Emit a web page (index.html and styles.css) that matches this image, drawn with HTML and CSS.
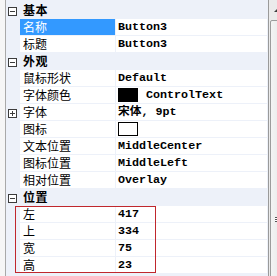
FILE: index.html
```html
<!DOCTYPE html>
<html lang="zh-CN">
<head>
  <meta charset="UTF-8" />
  <title>属性</title>
  <link rel="stylesheet" href="styles.css">
</head>
<body>
  <div class="pane">
    <div class="edge"></div>

    <div class="grid">
      <div class="row cat">
        <span class="gutter"><svg class="tog" viewBox="0 0 9 9"><rect x="0.5" y="0.5" width="8" height="8"/><line x1="2" y1="4.5" x2="7" y2="4.5"/></svg></span>
        <span class="label">基本</span>
      </div>
      <div class="row sel">
        <span class="gutter"></span>
        <span class="name">名称</span>
        <span class="value">Button3</span>
      </div>
      <div class="row">
        <span class="gutter"></span>
        <span class="name">标题</span>
        <span class="value">Button3</span>
      </div>

      <div class="row cat">
        <span class="gutter"><svg class="tog" viewBox="0 0 9 9"><rect x="0.5" y="0.5" width="8" height="8"/><line x1="2" y1="4.5" x2="7" y2="4.5"/></svg></span>
        <span class="label">外观</span>
      </div>
      <div class="row">
        <span class="gutter"></span>
        <span class="name">鼠标形状</span>
        <span class="value">Default</span>
      </div>
      <div class="row">
        <span class="gutter"></span>
        <span class="name">字体颜色</span>
        <span class="value"><i class="swatch black"></i>ControlText</span>
      </div>
      <div class="row">
        <span class="gutter"><svg class="tog" viewBox="0 0 9 9"><rect x="0.5" y="0.5" width="8" height="8"/><line x1="2" y1="4.5" x2="7" y2="4.5"/><line x1="4.5" y1="2" x2="4.5" y2="7"/></svg></span>
        <span class="name">字体</span>
        <span class="value">宋体, 9pt</span>
      </div>
      <div class="row">
        <span class="gutter"></span>
        <span class="name">图标</span>
        <span class="value"><i class="swatch empty"></i></span>
      </div>
      <div class="row">
        <span class="gutter"></span>
        <span class="name">文本位置</span>
        <span class="value">MiddleCenter</span>
      </div>
      <div class="row">
        <span class="gutter"></span>
        <span class="name">图标位置</span>
        <span class="value">MiddleLeft</span>
      </div>
      <div class="row">
        <span class="gutter"></span>
        <span class="name">相对位置</span>
        <span class="value">Overlay</span>
      </div>

      <div class="row cat">
        <span class="gutter"><svg class="tog" viewBox="0 0 9 9"><rect x="0.5" y="0.5" width="8" height="8"/><line x1="2" y1="4.5" x2="7" y2="4.5"/></svg></span>
        <span class="label">位置</span>
      </div>
      <div class="group">
        <div class="row">
          <span class="gutter"></span>
          <span class="name">左</span>
          <span class="value">417</span>
        </div>
        <div class="row">
          <span class="gutter"></span>
          <span class="name">上</span>
          <span class="value">334</span>
        </div>
        <div class="row">
          <span class="gutter"></span>
          <span class="name">宽</span>
          <span class="value">75</span>
        </div>
        <div class="row">
          <span class="gutter"></span>
          <span class="name">高</span>
          <span class="value">23</span>
        </div>
        <div class="mark"></div>
      </div>
    </div>

    <div class="scroll">
      <div class="sbar">
        <div class="arrow"></div>
        <div class="thumb"><div class="grip"></div></div>
      </div>
    </div>
  </div>
</body>
</html>
```

FILE: styles.css
```css
body {
  margin: 0;
  background: #f0f0f0;
  font-family: "Noto Sans CJK SC", sans-serif;
  font-size: 12px;
  color: #000;
}
.pane {
  display: flex;
  height: 276px;
  overflow: hidden;
}
.edge {
  width: 5px;
  background: #f6f6f6;
  border-right: 1px solid #a9a9a9;
}
.grid {
  width: 262px;
  padding-top: 2px;
  background: #edf1f9;
  border-right: 1px solid #9a9a9a;
}
.row {
  display: flex;
  height: 17px;
  line-height: 16px;
}
.gutter {
  width: 14px;
  flex: none;
  display: flex;
  align-items: flex-start;
}
.tog {
  width: 9px;
  height: 9px;
  margin: 5px 0 0 2px;
  fill: #fff;
  stroke: #3c3c3c;
  stroke-width: 1;
  shape-rendering: crispEdges;
}
.cat .label {
  padding-left: 3px;
  font-weight: bold;
  letter-spacing: 0.5px;
}
.name {
  width: 92px;
  padding-left: 3px;
  flex: none;
  height: 16px;
  background: #fff;
  border-right: 1px solid #edf1f9;
  border-bottom: 1px solid #edf1f9;
  white-space: nowrap;
}
.value {
  flex: 1;
  height: 16px;
  padding-left: 2px;
  margin-right: 1px;
  background: #fff;
  border-bottom: 1px solid #edf1f9;
  font-family: "Liberation Mono", "Noto Sans CJK SC", monospace;
  font-size: 11.7px;
  font-weight: bold;
  display: flex;
  align-items: center;
  white-space: nowrap;
}
.sel .name {
  background: #3399ff;
  color: #fff;
}
.swatch {
  display: inline-block;
  width: 18px;
  height: 12px;
  margin-right: 8px;
  border: 1px solid #000;
}
.swatch.black { background: #000; }
.swatch.empty { background: #fff; }
.group {
  position: relative;
}
.mark {
  position: absolute;
  left: 9px;
  top: 0;
  width: 139px;
  height: 65px;
  border: 1px solid #c0272d;
}
.scroll {
  flex: 1;
  overflow: hidden;
}
.sbar {
  width: 17px;
  height: 100%;
  background: #ebebeb;
}
.arrow {
  height: 20px;
  display: flex;
  justify-content: center;
  align-items: center;
}
.arrow::before {
  content: "";
  border-left: 4px solid transparent;
  border-right: 4px solid transparent;
  border-bottom: 4px solid #404040;
}
.thumb {
  margin-left: 1px;
  height: 400px;
  border: 1px solid #9c9c9c;
  border-radius: 2px;
  background: linear-gradient(to right, #f4f4f4, #e4e4e4);
  padding-top: 196px;
}
.grip {
  width: 7px;
  height: 5px;
  margin: 0 auto;
  border-top: 1px solid #555;
  border-bottom: 1px solid #555;
  background: linear-gradient(#fff 0 1px, #555 1px 2px, #fff 2px);
  box-sizing: border-box;
}
```
